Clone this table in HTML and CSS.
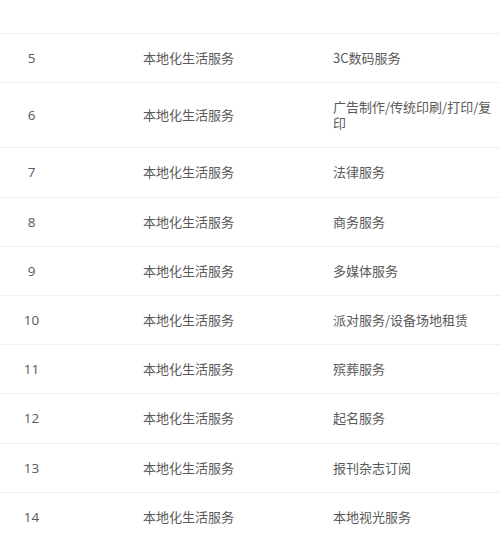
FILE: index.html
```html
<!DOCTYPE html>
<html lang="zh">
<head>
<meta charset="utf-8">
<link rel="stylesheet" href="styles.css">
</head>
<body>
<div class="wrap">
<table class="tbl">
<colgroup><col class="c1"><col class="c2"><col class="c3"></colgroup>
<tbody>
<tr><td>5</td><td>本地化生活服务</td><td>3C数码服务</td></tr>
<tr><td>6</td><td>本地化生活服务</td><td>广告制作/传统印刷/打印/复印</td></tr>
<tr><td>7</td><td>本地化生活服务</td><td>法律服务</td></tr>
<tr><td>8</td><td>本地化生活服务</td><td>商务服务</td></tr>
<tr><td>9</td><td>本地化生活服务</td><td>多媒体服务</td></tr>
<tr><td>10</td><td>本地化生活服务</td><td>派对服务/设备场地租赁</td></tr>
<tr><td>11</td><td>本地化生活服务</td><td>殡葬服务</td></tr>
<tr><td>12</td><td>本地化生活服务</td><td>起名服务</td></tr>
<tr><td>13</td><td>本地化生活服务</td><td>报刊杂志订阅</td></tr>
<tr><td>14</td><td>本地化生活服务</td><td>本地视光服务</td></tr>
</tbody>
</table>
</div>
</body>
</html>
```
FILE: styles.css
```css
html, body {
  margin: 0;
  background: #fff;
}
.wrap {
  padding-top: 33px;
  height: 538px;
  overflow: hidden;
  box-sizing: border-box;
}
.tbl {
  width: 500px;
  border-collapse: collapse;
  table-layout: fixed;
  font-family: "Microsoft YaHei", "Noto Sans CJK SC", "Noto Sans", sans-serif;
  font-size: 13px;
  line-height: 16px;
  color: #595959;
}
.c1 { width: 127px; }
.c2 { width: 190px; }
.c3 { width: 183px; }
.tbl td {
  padding: 16.1px 8px 16.1px 16px;
  border-top: 1px solid #f0f0f0;
  vertical-align: middle;
  word-break: break-all;
}
.tbl td:first-child {
  padding-left: 0;
  padding-right: 64px;
  text-align: center;
  font-family: "Open Sans", "Noto Sans", sans-serif;
  font-size: 13.5px;
}
```
